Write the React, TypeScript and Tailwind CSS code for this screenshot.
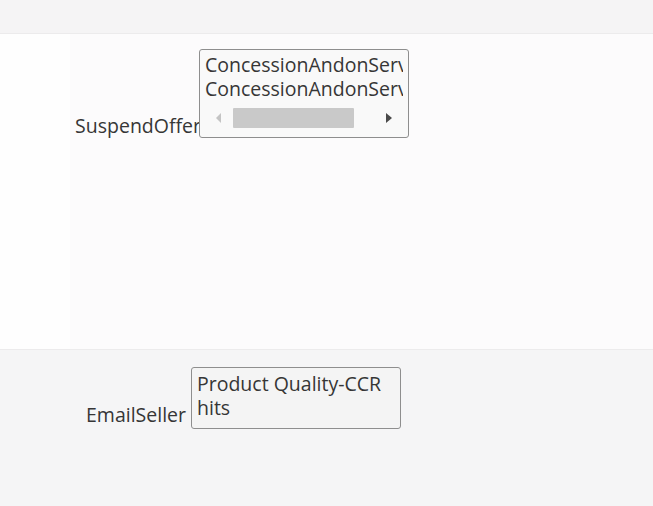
import React from "react";

export default function App() {
  const font = { fontFamily: '"Open Sans", "Noto Sans", sans-serif' };
  return (
    <div className="w-[653px] h-[506px] overflow-hidden flex flex-col text-[#363636]" style={font}>
      <div className="h-[34px] shrink-0 bg-[#f5f4f5] border-b border-[#ecebec]" />
      <div className="h-[315px] shrink-0 flex bg-[#fcfbfc]">
        <div className="w-[70px] bg-[#fefefe]" />
        <div className="flex-1 pt-[15px]">
          <div className="flex items-end">
            <div className="w-[131px] shrink-0 flex justify-end text-[19.5px] leading-[26px] whitespace-nowrap mb-[-1px]">
              <span>SuspendOffer</span>
            </div>
            <div className="relative -ml-[2px] w-[210px] h-[89px] rounded-[3px] border border-[#8e8e8e] bg-[#f9f9f9] pl-[5px] pr-[5px] pt-[3px] overflow-hidden">
              <div className="text-[19.5px] leading-[24px] whitespace-nowrap overflow-hidden">ConcessionAndonService</div>
              <div className="text-[19.5px] leading-[24px] whitespace-nowrap overflow-hidden">ConcessionAndonService</div>
              <div className="mt-[7px] h-[20px] flex items-center">
                <div className="w-[28px] flex justify-center">
                  <svg width="6" height="10" viewBox="0 0 6 10">
                    <path d="M5 0 L0 5 L5 10 Z" fill="#c4c4c4" />
                  </svg>
                </div>
                <div className="w-[121px] h-[20px] bg-[#c9c9c9] rounded-[1px]" />
                <div className="flex-1 flex justify-end pr-[11px]">
                  <svg width="6" height="10" viewBox="0 0 6 10">
                    <path d="M0 0 L6 5 L0 10 Z" fill="#4a4a4a" />
                  </svg>
                </div>
              </div>
            </div>
          </div>
        </div>
      </div>
      <div className="flex-1 bg-[#f5f5f6] border-t border-[#ecebec] pt-[17px]">
        <div className="flex items-end">
          <div className="w-[186px] shrink-0 flex justify-end text-[19.5px] leading-[26px] whitespace-nowrap mb-[1px]">
            <span>EmailSeller</span>
          </div>
          <div className="ml-[5px] w-[210px] h-[62px] rounded-[3px] border border-[#8e8e8e] bg-[#f4f4f4] pl-[5px] pt-[4px] overflow-hidden">
            <div className="text-[19.5px] leading-[24px] whitespace-nowrap">Product Quality-CCR</div>
            <div className="text-[19.5px] leading-[24px] whitespace-nowrap">hits</div>
          </div>
        </div>
      </div>
    </div>
  );
}
